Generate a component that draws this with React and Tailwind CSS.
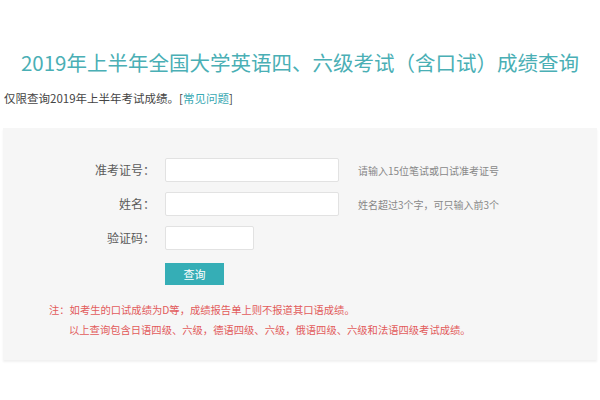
import React from "react";

const font = { fontFamily: '"Noto Sans CJK SC", "Noto Sans", sans-serif' };

function Row({ label, wide = true, hint }) {
  return (
    <div className="flex items-center h-[24px]">
      <label className="w-[153px] text-right text-[12px] text-[#5a5a5a] pr-[1px]">{label}</label>
      <input
        className={`ml-[9px] h-[24px] bg-white border border-[#e2e2e2] rounded-[2px] outline-none ${wide ? "w-[174px]" : "w-[89px]"}`}
      />
      {hint && <span className="ml-[19px] text-[10px] text-[#888]">{hint}</span>}
    </div>
  );
}

export default function App() {
  return (
    <div className="w-[600px] h-[400px] bg-white overflow-hidden" style={font}>
      {/* title */}
      <h1 className="pt-[47px] text-center text-[20.5px] leading-[30px] text-[#4aafb5]">
        2019年上半年全国大学英语四、六级考试（含口试）成绩查询
      </h1>
      <p className="mt-[12px] pl-[4px] text-[11.5px] leading-[18px] text-[#444]">
        仅限查询2019年上半年考试成绩。[<span className="text-[#3aa9b3]">常见问题</span>]
      </p>

      {/* form panel */}
      <div className="mx-[3px] mt-[21px] h-[232px] bg-[#f6f6f6] shadow-[0_2px_2px_rgba(0,0,0,0.06)] pt-[30px]">
        <div className="flex flex-col gap-[10px]">
          <Row label="准考证号：" hint="请输入15位笔试或口试准考证号" />
          <Row label="姓名：" hint="姓名超过3个字，可只输入前3个" />
          <Row label="验证码：" wide={false} />
          <div className="pl-[162px]">
            <button className="w-[59px] h-[22px] bg-[#35aeb6] text-white text-[11px]">查询</button>
          </div>
        </div>
        <div className="mt-[15px] pl-[46px] text-[10.3px] leading-[20px] text-[#e25b5b]">
          <p>注：如考生的口试成绩为D等，成绩报告单上则不报道其口语成绩。</p>
          <p className="pl-[20px]">以上查询包含日语四级、六级，德语四级、六级，俄语四级、六级和法语四级考试成绩。</p>
        </div>
      </div>
    </div>
  );
}
